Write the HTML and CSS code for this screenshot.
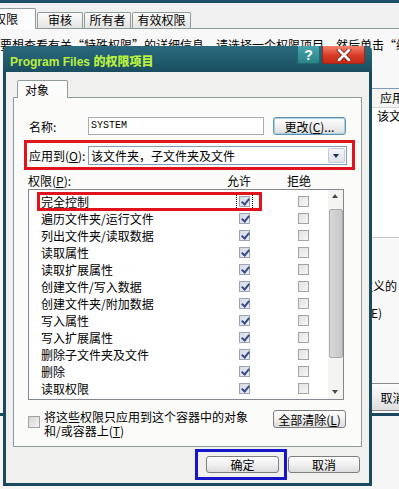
FILE: index.html
```html
<!DOCTYPE html>
<html lang="zh-CN">
<head>
    <meta charset="UTF-8">
    <meta name="viewport" content="width=device-width, initial-scale=1.0">
    <title>Program Files 的权限项目</title>
    <link rel="stylesheet" href="styles.css">
</head>
<body>
    <!-- Background: the folder properties window -->
    <div class="back">
        <div class="back-top"></div>
        <div class="back-tabs">
            <span class="btab active">权限</span>
            <span class="btab">审核</span>
            <span class="btab">所有者</span>
            <span class="btab">有效权限</span>
        </div>
        <div class="back-panel">
            <p class="back-intro">要想查看有关“特殊权限”的详细信息，请选择一个权限项目，然后单击“编辑”。</p>
            <div class="back-body">
                <div class="back-side">
                    <div class="lv">
                        <div class="lv-head">应用于</div>
                        <div class="lv-row">该文件夹</div>
                    </div>
                    <p class="back-note">定义的</p>
                    <p class="back-note second">(E)</p>
                    <button class="back-btn">取消</button>
                </div>
            </div>
        </div>
    </div>

    <!-- Permission entry dialog -->
    <div class="dialog">
        <div class="title-bar">
            <span class="title">Program Files <b>的权限项目</b></span>
            <span class="tb-btn help">?</span>
            <span class="tb-btn close">
                <svg width="16" height="12" viewBox="0 0 16 12"><path d="M3 1 L13 11 M13 1 L3 11" stroke="#8a3020" stroke-width="4.5" stroke-linecap="round"/><path d="M3 1 L13 11 M13 1 L3 11" stroke="#fff" stroke-width="2.5" stroke-linecap="round"/></svg>
            </span>
        </div>
        <div class="dialog-body">
            <div class="tabs"><span class="tab">对象</span></div>
            <div class="panel">
                <div class="field-row">
                    <span class="field-label">名称:</span>
                    <span class="text-input">SYSTEM</span>
                    <button class="btn btn-focus">更改(<u>C</u>)...</button>
                </div>
                <div class="mark-red apply-row">
                    <span class="field-label">应用到(<u>O</u>):</span>
                    <span class="combo">该文件夹，子文件夹及文件<span class="combo-arrow"></span></span>
                </div>
                <div class="perm-head">
                    <span class="ph-name">权限(<u>P</u>):</span>
                    <span class="ph-allow">允许</span>
                    <span>拒绝</span>
                </div>
                <div class="perm-list">
                    <div class="rows" id="permRows"></div>
                    <div class="scroll">
                        <span class="sb-arrow up"></span>
                        <span class="sb-thumb"></span>
                        <span class="sb-arrow down"></span>
                    </div>
                    <div class="mark-red row-mark"></div>
                </div>
                <div class="bottom-row">
                    <span class="cb-plain"></span>
                    <span class="bottom-text">将这些权限只应用到这个容器中的对象<br>和/或容器上(<u>T</u>)</span>
                    <button class="btn">全部清除(<u>L</u>)</button>
                </div>
            </div>
            <div class="actions">
                <button class="btn act">确定</button>
                <button class="btn act">取消</button>
            </div>
            <div class="mark-blue"></div>
        </div>
    </div>
    <script>
    // Permission rows
    const perms = ['完全控制', '遍历文件夹/运行文件', '列出文件夹/读取数据', '读取属性', '读取扩展属性',
        '创建文件/写入数据', '创建文件夹/附加数据', '写入属性', '写入扩展属性', '删除子文件夹及文件', '删除', '读取权限'];
    document.getElementById('permRows').innerHTML = perms.map((p, i) => `
        <div class="perm-row">
            <span>${p}</span>
            <span class="cb on${i === 0 ? ' focus' : ''}"></span>
            <span class="cb"></span>
        </div>
    `).join('');
    </script>
</body>
</html>
```

FILE: styles.css
```css
* { box-sizing: border-box; }
body { margin: 0; background: #f6f6f6; font-family: "Noto Sans CJK SC", "Liberation Sans", sans-serif; font-size: 12px; color: #000; overflow: hidden; }
p { margin: 0; }
button { font-family: inherit; font-size: 12px; color: #000; padding: 0; }
u { text-decoration: underline; }

/* Background window */
.back { height: 416px; border-bottom: 3px solid #1b4a5e; background: #f8f8f8; overflow: hidden; }
.back-top { height: 3px; background: #1e4f66; }
.back-tabs { height: 25px; background: #f0f0f0; display: flex; align-items: flex-end; margin-left: -26px; gap: 1px; }
.btab { flex-shrink: 0; height: 16px; line-height: 14px; text-align: center; white-space: nowrap; border: 1px solid #919b9c; border-bottom: none; border-radius: 2px 2px 0 0; background: linear-gradient(#fbfbfb, #e4e4e2); }
.btab:nth-child(2) { width: 46px; }
.btab:nth-child(3) { width: 47px; }
.btab:nth-child(4) { width: 59px; }
.btab.active { width: 62px; height: 21px; line-height: 19px; text-align: left; padding-left: 19px; background: #fcfcfe; margin-bottom: -1px; position: relative; }
.back-panel { border-top: 1px solid #919b9c; }
.back-intro { margin-top: 8px; line-height: 16px; white-space: nowrap; }
.back-body { display: flex; justify-content: flex-end; }
.back-side { width: 31px; }
.lv { margin-top: 35px; height: 150px; width: 60px; background: #fff; border-top: 1px solid #7f9db9; border-bottom: 1px solid #c9c9c9; }
.lv-head { height: 19px; line-height: 17px; padding-left: 12px; background: #f4f4f2; border-bottom: 1px solid #d6d6d2; white-space: nowrap; }
.lv-row { height: 16px; line-height: 15px; padding-left: 9px; white-space: nowrap; }
.back-note { margin: 40px 0 0 -7px; line-height: 16px; white-space: nowrap; }
.back-note.second { margin: 11px 0 0 -1px; }
.back-btn { display: block; margin: 62px 0 0 -13px; width: 75px; height: 28px; border: 1px solid #8a8a8a; border-radius: 3px; background: linear-gradient(#fdfdfd, #dedede); }

/* Dialog */
.dialog { position: absolute; left: 3px; top: 46px; width: 369px; }
.title-bar { height: 26px; display: flex; align-items: center; padding: 0 7px; background: linear-gradient(#2b6a7e, #205a6d 60%, #1b4d60); border-radius: 5px 5px 0 0; }
.title { font-family: "Liberation Sans", "Noto Sans CJK SC", sans-serif; font-weight: bold; font-size: 12px; color: #b9ef3e; white-space: nowrap; margin-top: 2px; }
.title b { font-family: "Noto Sans CJK SC", sans-serif; }
.tb-btn { align-self: flex-start; height: 18px; display: flex; align-items: center; justify-content: center; border-radius: 0 0 3px 3px; }
.help { margin-left: auto; width: 23px; background: linear-gradient(#4aa6ac, #2a8489); color: #fff; font-family: "Liberation Sans", sans-serif; font-weight: bold; font-size: 14px; border: 1px solid #1f6a70; border-top: none; }
.close { width: 43px; margin-left: 2px; background: linear-gradient(#f4826e, #d83c26 55%, #c52a18); border: 1px solid #9a2a1a; border-top: none; }
.dialog-body { position: relative; background: #f0f0ee; border: 3px solid #1b4a5e; border-top: none; padding: 8px 7px 10px; }
.tabs { display: flex; padding-left: 4px; }
.tab { height: 18px; width: 51px; padding: 1px 0 0 7px; line-height: 16px; border: 1px solid #919b9c; border-bottom: none; border-radius: 2px 2px 0 0; background: #fcfcfd; margin-bottom: -1px; position: relative; z-index: 1; }
.panel { height: 350px; border: 1px solid #919b9c; background: #fbfbfa; padding: 19px 15px 0 14px; }

.field-row { display: flex; align-items: center; height: 18px; }
.field-label { width: 60px; padding-left: 1px; white-space: nowrap; }
.text-input { width: 176px; height: 18px; border: 1px solid #a5acb2; background: #fff; font-family: "Liberation Mono", monospace; font-size: 10px; line-height: 16px; padding-left: 2px; }
.btn { border: 1px solid #7d7d7d; border-radius: 3px; background: linear-gradient(#fefefe, #f0f0f0 50%, #dcdcdc); height: 18px; line-height: 15px; white-space: nowrap; }
.field-row .btn { margin-left: 9px; width: 73px; }
.btn-focus { border-color: #5d93ad; box-shadow: inset 0 0 0 1px #a9d0e4; }

.mark-red { border: 3px solid #e0141c; }
.apply-row { display: flex; align-items: center; margin: 5px -9px 0 -4px; height: 30px; padding-left: 1px; }
.apply-row .field-label { width: 60px; }
.combo { position: relative; width: 259px; height: 19px; border: 1px solid #7f9db9; background: #fff; line-height: 17px; padding-left: 2px; white-space: nowrap; }
.combo-arrow { position: absolute; right: 1px; top: 1px; width: 17px; height: 15px; border: 1px solid #c3cad6; border-radius: 2px; background: linear-gradient(#f4f6fa, #dfe3ea); }
.combo-arrow::after { content: ""; position: absolute; left: 4px; top: 5px; border: 3.5px solid transparent; border-top: 4px solid #1b2a5a; }

.perm-head { display: flex; margin-top: 3px; height: 16px; line-height: 15px; }
.ph-name { width: 199px; }
.ph-allow { width: 60px; }

.perm-list { position: relative; display: flex; width: 316px; height: 211px; border: 1px solid #828790; background: #fff; }
.rows { flex: 1; padding: 3px 0 2px; }
.perm-row { display: grid; grid-template-columns: 198px 11px 48px 11px; align-items: center; height: 17px; padding-left: 12px; white-space: nowrap; }
.cb { width: 11px; height: 11px; border: 1px solid #a3a3a3; background: linear-gradient(135deg, #e2e2e2, #f6f6f6); position: relative; }
.perm-row .cb:last-child { grid-column: 4; }
.cb.on { border-color: #9ca3b4; background: linear-gradient(135deg, #d4dae6, #eef1f6); }
.cb.on::after { content: ""; position: absolute; left: 3px; top: 0px; width: 3px; height: 6px; border: solid #3a4a88; border-width: 0 2px 2px 0; transform: rotate(40deg); }
.cb.focus { outline: 1px dotted #000; outline-offset: 2px; }
.scroll { width: 15px; display: flex; flex-direction: column; align-items: center; background: #f4f4f0; }
.sb-arrow { position: relative; width: 15px; height: 15px; }
.sb-arrow::after { content: ""; position: absolute; left: 4px; border: 3.5px solid transparent; }
.sb-arrow.up::after { top: 4px; border-bottom: 4px solid #4a4a4a; border-top: none; }
.sb-arrow.down::after { top: 6px; border-top: 4px solid #4a4a4a; border-bottom: none; }
.sb-thumb { width: 14px; height: 149px; margin-top: 4px; border: 1px solid #a9a9a9; border-radius: 2px; background: linear-gradient(90deg, #d8d8d8, #c6c6c6); }
.sb-arrow.down { margin-top: auto; }
.row-mark { position: absolute; left: 8px; top: 2px; width: 225px; height: 19px; }

.bottom-row { display: flex; align-items: flex-start; margin-top: 10px; }
.cb-plain { width: 12px; height: 12px; margin-top: 6px; border: 1px solid #a0a0a0; background: linear-gradient(135deg, #d6d6d6, #f4f4f4); }
.bottom-text { margin-left: 4px; line-height: 14px; white-space: nowrap; }
.bottom-row .btn { margin-left: auto; width: 73px; }

.actions { display: flex; justify-content: flex-end; gap: 9px; margin: 9px 2px 0 0; }
.act { width: 73px; height: 17px; }
.act:last-child { width: 72px; }
.mark-blue { position: absolute; left: 189px; top: 377px; width: 92px; height: 31px; border: 3px solid #1616c8; }
```
